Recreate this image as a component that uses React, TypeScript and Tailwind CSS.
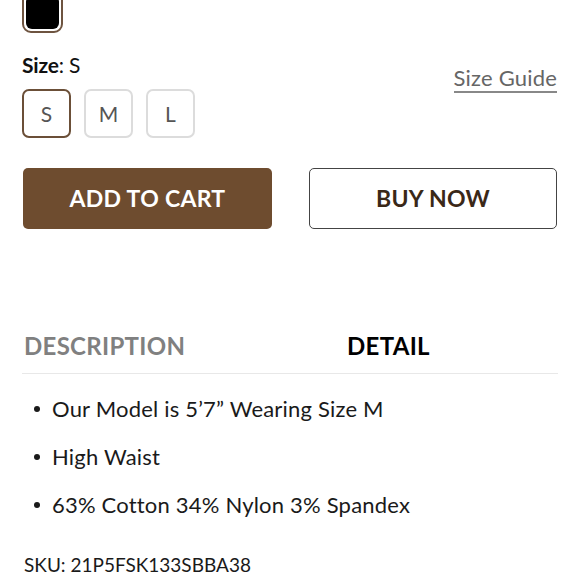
import React from "react";

export default function App() {
  const sizes = ["S", "M", "L"];
  return (
    <div
      className="w-[580px] h-[579px] overflow-hidden bg-white px-[22px]"
      style={{ fontFamily: "Lato, 'Noto Sans', sans-serif" }}
    >
      <div className="-mt-[8px] w-[41px] h-[41px] rounded-[9px] border-2 border-[#6e5440] p-[2px]">
        <div className="w-full h-full rounded-[6px] bg-black" />
      </div>

      <div className="flex items-start justify-between mt-[20px]">
        <div>
          <div className="text-[21px] leading-[24px] text-[#111] tracking-[-0.2px]">
            <span className="font-bold">Size</span>
            <span>: S</span>
          </div>
          <div className="flex gap-[13px] mt-[12px]">
            {sizes.map((s, i) => (
              <div
                key={s}
                className={
                  i === 0
                    ? "w-[49px] h-[49px] rounded-[7px] border-2 border-[#6b4f38] flex items-center justify-center text-[21px] text-[#555]"
                    : "w-[49px] h-[49px] rounded-[7px] border-2 border-[#dcdcdc] flex items-center justify-center text-[21px] text-[#555]"
                }
              >
                {s}
              </div>
            ))}
          </div>
        </div>
        <a className="mt-[13px] text-[22px] leading-[24px] text-[#666] border-b-2 border-[#888] pb-[1px] mr-px tracking-[0.2px]">
          Size Guide
        </a>
      </div>

      <div className="flex justify-between mt-[30px] pl-px pr-px">
        <button className="w-[249px] h-[61px] rounded-[5px] bg-[#6e4c2f] text-white text-[23px] font-bold tracking-[0.3px]">
          ADD TO CART
        </button>
        <button className="w-[248px] h-[61px] rounded-[5px] border border-[#444] text-[#3a2818] text-[23px] font-bold tracking-[0.3px]">
          BUY NOW
        </button>
      </div>

      <div className="mt-[99px] flex items-center h-[36px] border-b border-[#e8e8e8] pb-[9px] box-content">
        <div className="w-[325px] pl-[2px] text-[24px] font-bold text-[#808080] tracking-[0.3px]">
          DESCRIPTION
        </div>
        <div className="text-[24px] font-bold text-black tracking-[0.3px]">
          DETAIL
        </div>
      </div>

      <ul className="mt-[11px] text-[22px] text-[#1a1a1a] leading-[26px] tracking-[0.2px]">
        {[
          "Our Model is 5\u20197\u201d Wearing Size M",
          "High Waist",
          "63% Cotton 34% Nylon 3% Spandex",
        ].map((t) => (
          <li key={t} className="flex items-center h-[48px]">
            <span className="w-[6px] h-[6px] rounded-full bg-[#1a1a1a] ml-[12px] mr-[12px]" />
            <span>{t}</span>
          </li>
        ))}
      </ul>

      <div className="mt-[24px] pl-[2px] text-[19px] text-[#1a1a1a] leading-[24px]">
        SKU: 21P5FSK133SBBA38
      </div>
    </div>
  );
}
